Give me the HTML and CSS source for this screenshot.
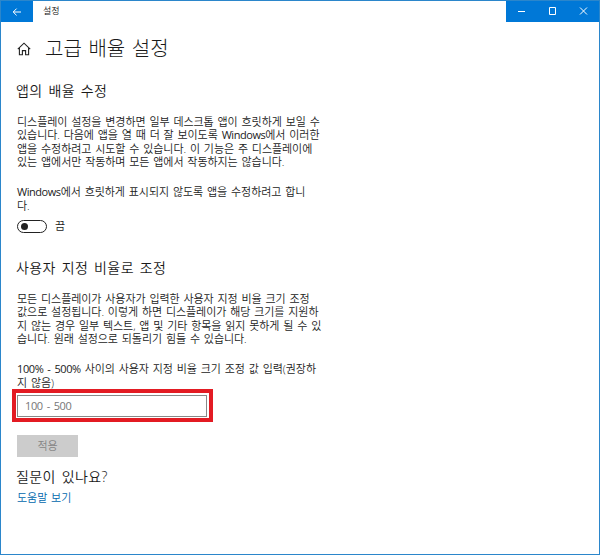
FILE: index.html
```
<!DOCTYPE html>
<html lang="ko">
<head>
<meta charset="utf-8">
<title>설정</title>
<link rel="stylesheet" href="styles.css">
</head>
<body>
<div class="window">
  <header class="titlebar">
    <div class="back"><svg width="10" height="10" viewBox="0 0 10 10"><path d="M9 5H1.2M4.6 1.6L1.2 5l3.4 3.4"/></svg></div>
    <span class="caption">설정</span>
    <div class="controls">
      <svg width="31" height="21" viewBox="0 0 31 21"><path d="M12 10.5h7"/></svg>
      <svg width="31" height="21" viewBox="0 0 31 21"><path d="M12.5 6.5h6v7h-6z"/></svg>
      <svg width="31" height="21" viewBox="0 0 31 21"><path d="M12 6.5l7 7m0-7l-7 7"/></svg>
    </div>
  </header>
  <main>
    <div class="heading">
      <svg class="home" width="14" height="14" viewBox="0 0 14 14"><path d="M.8 7.2L7 1.2l6.2 6M2.4 6v6.8h3V8.6h3.2v4.2h3V6"/></svg>
      <h1>고급 배율 설정</h1>
    </div>
    <h2>앱의 배율 수정</h2>
    <p class="about">디스플레이 설정을 변경하면 일부 데스크톱 앱이 흐릿하게 보일 수<br>있습니다. 다음에 앱을 열 때 더 잘 보이도록 <span class="latin">Windows</span>에서 이러한<br>앱을 수정하려고 시도할 수 있습니다. 이 기능은 주 디스플레이에<br>있는 앱에서만 작동하며 모든 앱에서 작동하지는 않습니다.</p>
    <p class="label"><span class="latin">Windows</span>에서 흐릿하게 표시되지 않도록 앱을 수정하려고 합니<br>다.</p>
    <div class="toggle-row"><span class="toggle"></span><span>끔</span></div>
    <h2 class="custom">사용자 지정 비율로 조정</h2>
    <p class="about">모든 디스플레이가 사용자가 입력한 사용자 지정 비율 크기 조정<br>값으로 설정됩니다. 이렇게 하면 디스플레이가 해당 크기를 지원하<br>지 않는 경우 일부 텍스트, 앱 및 기타 항목을 읽지 못하게 될 수 있<br>습니다. 원래 설정으로 되돌리기 힘들 수 있습니다.</p>
    <p class="label"><span class="number">100% - 500%</span> 사이의 사용자 지정 비율 크기 조정 값 입력(권장하<br>지 않음)</p>
    <div class="highlight"><div class="field">100 - 500</div></div>
    <div class="apply">적용</div>
    <h2 class="question">질문이 있나요?</h2>
    <a class="help">도움말 보기</a>
  </main>
</div>
</body>
</html>
```
FILE: styles.css
```
* { box-sizing: border-box; }
body {
  margin: 0;
  font: 350 11px/13.35px "Open Sans", "Noto Sans CJK KR", sans-serif;
  color: #1a1a1a;
  letter-spacing: -0.05px;
  word-spacing: 1.05px;
}
.window {
  width: 600px;
  height: 555px;
  border: 1px solid #2b86cb;
  background: #fff;
  overflow: hidden;
}
svg { display: block; fill: none; stroke: #fff; stroke-width: 1; }
.titlebar { display: flex; height: 21px; }
.back {
  width: 32px;
  background: #0078d7;
  display: flex;
  align-items: center;
  justify-content: center;
}
.caption { margin-left: 10px; font-size: 9px; line-height: 20px; color: #111; }
.controls { display: flex; width: 93px; margin-left: auto; background: #0078d7; }
main { padding: 0 16px; }
h1, h2, p { margin: 0; font-weight: 350; }
.heading { display: flex; align-items: center; height: 28px; margin-top: 13px; }
.home { stroke: #222; stroke-width: 1.1; }
h1 {
  margin-left: 14px;
  font-size: 20px;
  line-height: 28px;
  font-weight: 300;
  letter-spacing: 0;
  word-spacing: 1.4px;
}
h2 { font-size: 14px; line-height: 20px; word-spacing: 1.8px; letter-spacing: 0.4px; margin: 18px 0 0 -1px; }
.about { margin-top: 14px; white-space: nowrap; }
.label { margin-top: 17px; white-space: nowrap; }
.latin, .number, .field { font-weight: 400; }
.latin { letter-spacing: -0.45px; }
.number { letter-spacing: -0.4px; word-spacing: 1.5px; }
.toggle-row { display: flex; align-items: center; gap: 8px; height: 14px; margin-top: 7px; }
.toggle {
  width: 30px;
  height: 13px;
  border: 1.5px solid #222;
  border-radius: 7px;
  display: flex;
  align-items: center;
  padding-left: 3px;
}
.toggle::before { content: ""; width: 7px; height: 7px; border-radius: 50%; background: #222; }
.custom { margin-top: 25px; }
.highlight {
  width: 201px;
  height: 33px;
  margin: 0 0 0 -5px;
  border: 4px solid #e31b23;
  padding: 1px;
}
.field {
  height: 22px;
  margin: 1px 1px 0 0;
  border: 1px solid #888;
  padding-left: 7px;
  line-height: 20px;
  letter-spacing: -0.4px;
  word-spacing: 1.5px;
  color: #777;
}
.apply {
  width: 61px;
  height: 22px;
  margin-top: 13px;
  background: #ccc;
  color: #858585;
  text-align: center;
  line-height: 21px;
}
.question { margin-top: 10px; }
.help { display: block; margin-top: 4px; color: #0067ad; }
```
